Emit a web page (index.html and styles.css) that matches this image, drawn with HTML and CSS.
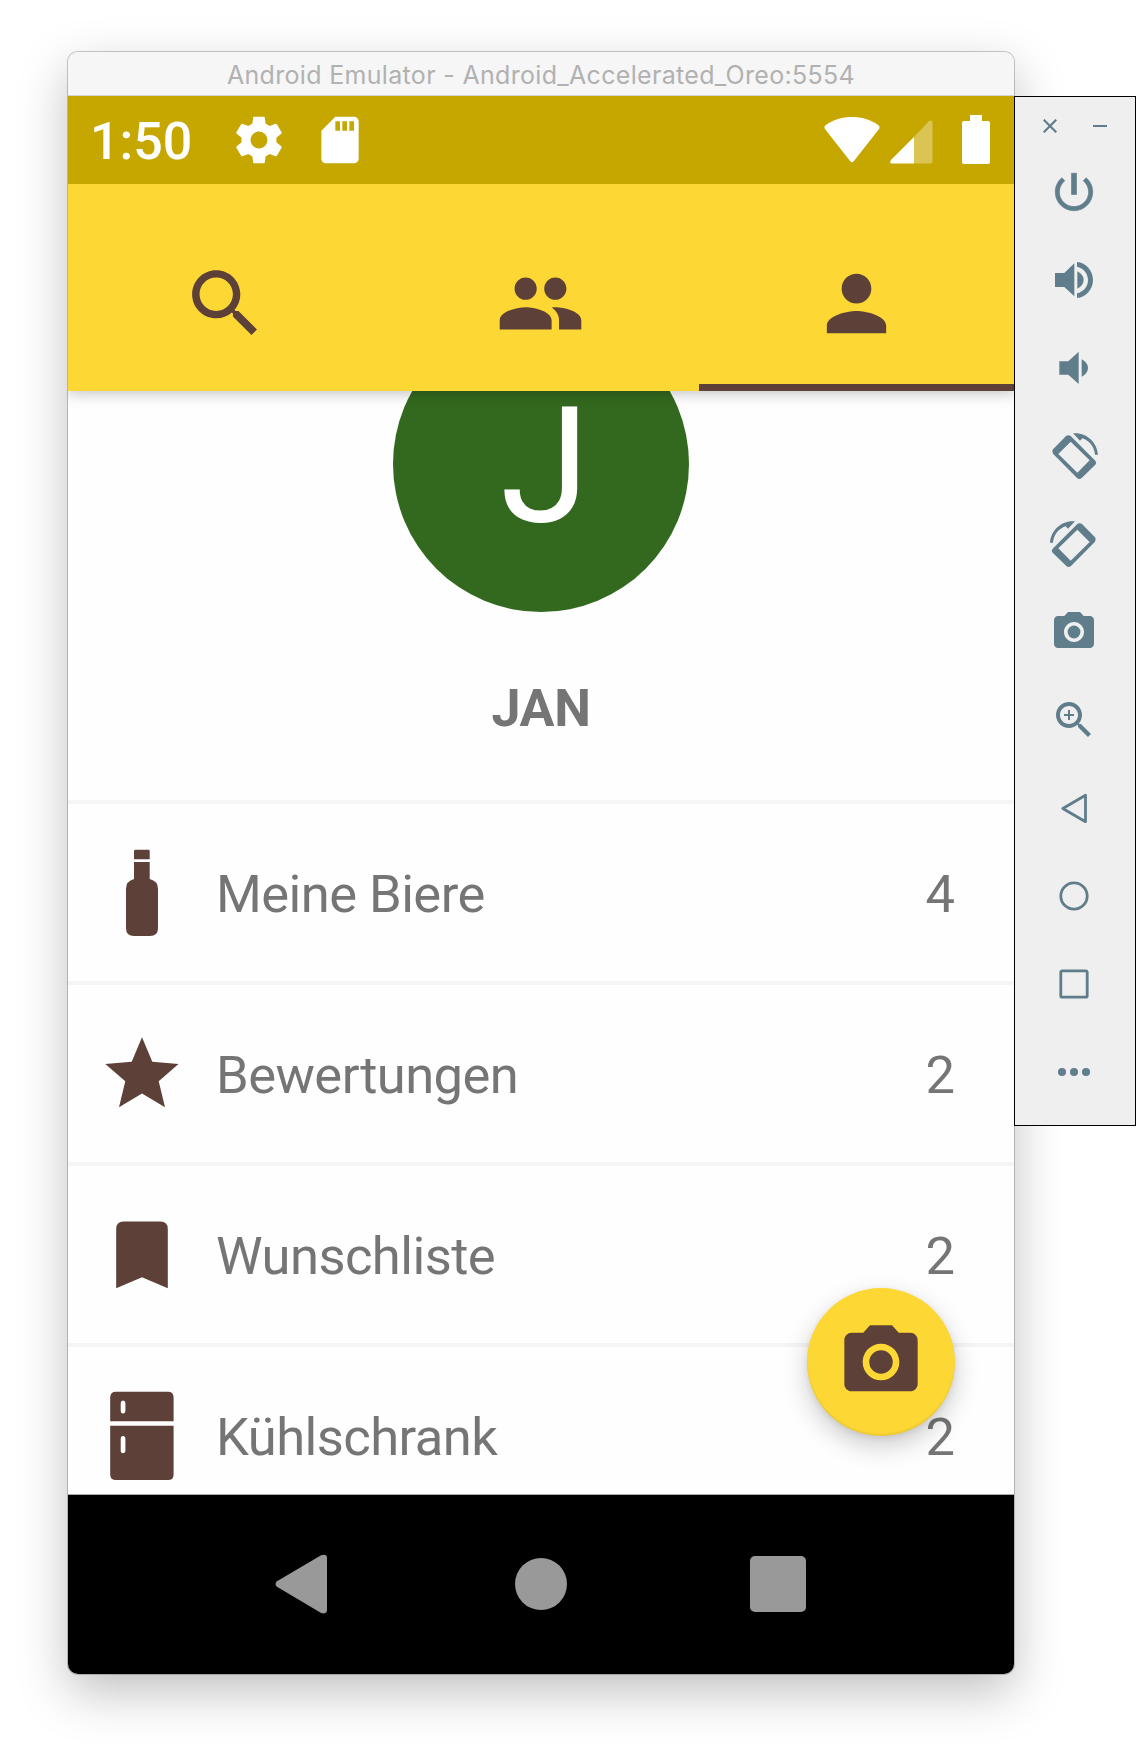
FILE: index.html
```html
<!DOCTYPE html>
<html lang="de">
<head>
<meta charset="utf-8">
<title>Android Emulator - Android_Accelerated_Oreo:5554</title>
<link rel="stylesheet" href="styles.css">
</head>
<body>
<main class="window">
  <header class="titlebar"><span class="title">Android Emulator - Android_Accelerated_Oreo:5554</span></header>
  <div class="status">
    <span class="clock">1:50</span>
    <svg class="gear" width="56" height="56" viewBox="0 0 24 24"><path d="M19.43 12.98c.04-.32.07-.64.07-.98s-.03-.66-.07-.98l2.11-1.65c.19-.15.24-.42.12-.64l-2-3.46c-.12-.22-.39-.3-.61-.22l-2.49 1c-.52-.4-1.08-.73-1.69-.98l-.38-2.65C14.46 2.18 14.25 2 14 2h-4c-.25 0-.46.18-.49.42l-.38 2.65c-.61.25-1.17.59-1.69.98l-2.49-1c-.23-.09-.49 0-.61.22l-2 3.46c-.13.22-.07.49.12.64l2.11 1.65c-.04.32-.07.65-.07.98s.03.66.07.98l-2.11 1.65c-.19.15-.24.42-.12.64l2 3.46c.12.22.39.3.61.22l2.49-1c.52.4 1.08.73 1.69.98l.38 2.65c.03.24.24.42.49.42h4c.25 0 .46-.18.49-.42l.38-2.65c.61-.25 1.17-.59 1.69-.98l2.49 1c.23.09.49 0 .61-.22l2-3.46c.12-.22.07-.49-.12-.64l-2.11-1.65zM12 15.6c-1.98 0-3.6-1.62-3.6-3.6s1.62-3.6 3.6-3.6 3.6 1.62 3.6 3.6-1.62 3.6-3.6 3.6z"/></svg>
    <svg class="sd" width="56" height="56" viewBox="0 0 24 24"><path d="M18 2h-8L4.020 8 4 20c0 1.100.9 2 2 2h12c1.100 0 2-.9 2-2V4c0-1.100-.9-2-2-2zm-6 6h-2V4h2v4zm3 0h-2V4h2v4zm3 0h-2V4h2v4z"/></svg>
    <span class="spacer"></span>
    <svg class="wifi" width="56" height="46" viewBox="0 0 58 46" preserveAspectRatio="none"><path d="M1 12C0 10.500 .5 9 2 8C10 2.500 19 0 29 0S48 2.500 56 8C57.500 9 58 10.500 57 12L31 44Q29 46.500 27 44Z"/></svg>
    <svg class="cell" width="43" height="44" viewBox="0 0 43 44"><path opacity=".33" d="M24 17L38.500 1.500Q42.500-1 42.500 3V41Q42.500 43.500 40 43.500H24Z"/><path d="M24 17V43.500H2Q-1 43.500 1 40Z"/></svg>
    <svg class="battery" width="28" height="49" viewBox="0 0 28 49"><path d="M8 0H20V6H26Q28 6 28 8V47Q28 49 26 49H2Q0 49 0 47V8Q0 6 2 6H8Z"/></svg>
  </div>
  <nav class="tabs">
    <div class="tab"><svg width="89" height="89" viewBox="0 0 24 24"><path d="M15.500 14h-.79l-.28-.27C15.410 12.590 16 11.110 16 9.500 16 5.910 13.090 3 9.500 3S3 5.910 3 9.500 5.910 16 9.500 16c1.610 0 3.090-.59 4.230-1.570l.27.28v.79l5 4.990L20.490 19l-4.990-5zm-6 0C7.010 14 5 11.990 5 9.500S7.010 5 9.500 5 14 7.010 14 9.500 11.990 14 9.500 14z"/></svg></div>
    <div class="tab"><svg width="89" height="89" viewBox="0 0 24 24"><path d="M16 11c1.660 0 2.990-1.340 2.990-3S17.660 5 16 5c-1.660 0-3 1.340-3 3s1.340 3 3 3zm-8 0c1.660 0 2.990-1.340 2.990-3S9.660 5 8 5C6.340 5 5 6.340 5 8s1.340 3 3 3zm0 2c-2.330 0-7 1.170-7 3.500V19h14v-2.500c0-2.330-4.670-3.500-7-3.500zm8 0c-.29 0-.62.02-.97.05 1.160.84 1.970 1.970 1.970 3.450V19h6v-2.500c0-2.330-4.670-3.500-7-3.500z"/></svg></div>
    <div class="tab active"><svg width="89" height="89" viewBox="0 0 24 24"><path d="M12 12c2.210 0 4-1.790 4-4s-1.790-4-4-4-4 1.790-4 4 1.790 4 4 4zm0 2c-2.670 0-8 1.340-8 4v2h16v-2c0-2.660-5.330-4-8-4z"/></svg></div>
  </nav>
  <section class="content">
    <div class="profile">
      <div class="avatar"><span class="initial">J</span></div>
      <div class="name">JAN</div>
    </div>
    <div class="row">
      <svg width="88" height="88" viewBox="0 0 88 88"><path d="M37.500 .8H50.500Q51.700 .8 51.700 2V10.300H36V2Q36 .8 37.500 .8ZM36 13H51.700V30Q60 32 60 40V79Q60 87 52 87H36Q28 87 28 79V40Q28 32 36 30Z"/></svg>
      <span class="label">Meine Biere</span><span class="count">4</span>
    </div>
    <div class="row">
      <svg width="88" height="88" viewBox="0 0 88 88"><path d="M44 7.300L54.300 31.700L80.500 34L60.700 51.300L67 77.300L44 63.500L21 77.300L27.300 51.300L7.300 34L33.700 31.700Z"/></svg>
      <span class="label">Bewertungen</span><span class="count">2</span>
    </div>
    <div class="row">
      <svg width="88" height="88" viewBox="0 0 88 88"><path d="M25.500 10.500H62.500Q69.800 10.500 69.800 18V77.300L44 66.300L18.200 77.300V18Q18.200 10.500 25.500 10.500Z"/></svg>
      <span class="label">Wunschliste</span><span class="count">2</span>
    </div>
    <div class="row">
      <svg width="88" height="90" viewBox="0 0 88 90"><path fill-rule="evenodd" d="M18 .8H70Q75.600 .8 75.600 6.500V30.300H12.200V6.500Q12.200 .8 18 .8ZM12.200 34.700H75.600V83.500Q75.600 89 70 89H18Q12.200 89 12.200 83.500ZM25 9.500Q22.700 9.500 22.700 12V20Q22.700 22.500 25 22.500T27.400 20V12Q27.400 9.500 25 9.500ZM25 45Q22.700 45 22.700 48V59.500Q22.700 62.300 25 62.300T27.400 59.500V48Q27.400 45 25 45Z"/></svg>
      <span class="label">Kühlschrank</span><span class="count">2</span>
    </div>
    <div class="fab"><svg width="88" height="88" viewBox="0 0 24 24"><circle cx="12" cy="12" r="3.200"/><path d="M9 2L7.170 4H4c-1.100 0-2 .9-2 2v12c0 1.100.9 2 2 2h16c1.100 0 2-.9 2-2V6c0-1.100-.9-2-2-2h-3.170L15 2H9zm3 15c-2.760 0-5-2.240-5-5s2.240-5 5-5 5 2.240 5 5-2.240 5-5 5z"/></svg></div>
  </section>
  <footer class="navbar">
    <div class="key back"><svg width="52" height="60" viewBox="0 0 53 61" preserveAspectRatio="none"><path d="M2 27.700L47 1.300Q53 -.5 53 4V57Q53 61.500 47 60L2 33.300Q-1 30.500 2 27.700Z"/></svg></div>
    <div class="key"><svg width="52" height="52" viewBox="0 0 52 52"><circle cx="26" cy="26" r="26"/></svg></div>
    <div class="key"><svg width="56" height="56" viewBox="0 0 56 56"><rect width="56" height="56" rx="5"/></svg></div>
  </footer>
</main>
<aside class="tools">
  <div class="controls">
    <svg width="14" height="14" viewBox="0 0 14 14"><path class="line" stroke-width="2.200" d="M.7 .7L13.300 13.300M13.300 .7L.7 13.300"/></svg>
    <svg width="14" height="14" viewBox="0 0 14 14"><path class="line" stroke-width="2" d="M0 7H14"/></svg>
  </div>
  <div class="tool"><svg width="50" height="50" viewBox="0 0 24 24"><path d="M13.200 3h-2.400v10.200h2.400V3zm4.630 2.170l-1.420 1.420C17.990 7.860 19 9.810 19 12c0 3.870-3.130 7-7 7s-7-3.130-7-7c0-2.190 1.010-4.140 2.580-5.420L6.170 5.170C4.230 6.820 3 9.260 3 12c0 4.970 4.030 9 9 9s9-4.030 9-9c0-2.740-1.230-5.180-3.170-6.830z" stroke="#607d8b" stroke-width=".3"/></svg></div>
  <div class="tool"><svg width="50" height="50" viewBox="0 0 150 150"><path d="M18 54H46L76 25V124L46 96H18ZM85 49C97 55 104 64 104 75S97 95 85 101ZM84 21C111 23 132 47 132 75S111 127 84 129V115C103 111 117 95 117 75S103 39 84 35Z"/></svg></div>
  <div class="tool"><svg width="50" height="50" viewBox="0 0 150 150"><path d="M31 55H58L89 26V123L58 95H31ZM98 49C110 55 117 64 117 75S110 95 98 101Z"/></svg></div>
  <div class="tool"><svg width="50" height="50" viewBox="0 0 150 150"><g><path fill-rule="evenodd" d="M12 55L51 15Q58 10 65 15L139 89Q144 95 139 101L98 141Q91 147 84 141L12 68Q7 61 12 55ZM28 69L85 125L122 88L65 32Z"/><path d="M72 7C112 3 144 33 147 71H138C136 47 121 29 100 22L93 29Z"/></g></svg></div>
  <div class="tool"><svg width="50" height="50" viewBox="0 0 150 150"><g transform="matrix(-1 0 0 1 150 0)"><path fill-rule="evenodd" d="M12 55L51 15Q58 10 65 15L139 89Q144 95 139 101L98 141Q91 147 84 141L12 68Q7 61 12 55ZM28 69L85 125L122 88L65 32Z"/><path d="M72 7C112 3 144 33 147 71H138C136 47 121 29 100 22L93 29Z"/></g></svg></div>
  <div class="tool"><svg width="48" height="48" viewBox="0 0 24 24"><circle cx="12" cy="12" r="3.200"/><path d="M9 2L7.170 4H4c-1.100 0-2 .9-2 2v12c0 1.100.9 2 2 2h16c1.100 0 2-.9 2-2V6c0-1.100-.9-2-2-2h-3.170L15 2H9zm3 15c-2.760 0-5-2.240-5-5s2.240-5 5-5 5 2.240 5 5-2.240 5-5 5z"/></svg></div>
  <div class="tool"><svg width="48" height="48" viewBox="0 0 24 24"><path d="M15.500 14h-.79l-.28-.27C15.410 12.590 16 11.110 16 9.500 16 5.910 13.090 3 9.500 3S3 5.910 3 9.500 5.910 16 9.500 16c1.610 0 3.090-.59 4.230-1.570l.27.28v.79l5 4.990L20.490 19l-4.990-5zm-6 0C7.010 14 5 11.990 5 9.500S7.010 5 9.500 5 14 7.010 14 9.500 11.990 14 9.500 14z"/><path d="M12 10h-2v2H9v-2H7V9h2V7h1v2h2v1z"/></svg></div>
  <div class="tool"><svg width="48" height="48" viewBox="0 0 48 48"><path class="line" stroke-width="2.800" stroke-linejoin="round" d="M12.800 24.500L35.500 11.300V37.700Z"/></svg></div>
  <div class="tool"><svg width="48" height="48" viewBox="0 0 48 48"><circle class="line" stroke-width="2.800" cx="24" cy="24" r="13.200"/></svg></div>
  <div class="tool"><svg width="48" height="48" viewBox="0 0 48 48"><rect class="line" stroke-width="2.800" x="10.800" y="10.800" width="26.400" height="26.400" rx="1.500"/></svg></div>
  <div class="tool"><svg width="48" height="48" viewBox="0 0 48 48"><circle cx="12" cy="24" r="4"/><circle cx="24" cy="24" r="4"/><circle cx="36" cy="24" r="4"/></svg></div>
</aside>
</body>
</html>
```
FILE: styles.css
```css
* { box-sizing: border-box; }

body {
  margin: 0;
  width: 1136px;
  height: 1758px;
  padding: 52px 0 0 68px;
  display: flex;
  align-items: flex-start;
  overflow: hidden;
  background: #fff;
  font-family: Roboto, "Liberation Sans", sans-serif;
}

svg { display: block; flex: none; }

.window {
  width: 946px;
  height: 1622px;
  flex: none;
  display: flex;
  flex-direction: column;
  overflow: hidden;
  border-radius: 10px;
  background: #fefefe;
  box-shadow: 0 0 0 1px rgba(0, 0, 0, .2), 0 18px 50px rgba(0, 0, 0, .25);
}

.titlebar {
  height: 44px;
  flex: none;
  display: flex;
  align-items: center;
  justify-content: center;
  background: #f6f6f6;
  border-bottom: 1px solid #d4d4d4;
  color: #b1b1b1;
  font: 400 25px/30px Inter, "Liberation Sans", sans-serif;
  letter-spacing: .32px;
  white-space: nowrap;
}

.title { padding-top: 3px; }

.status {
  height: 88px;
  flex: none;
  display: flex;
  align-items: center;
  padding: 0 24px 0 22px;
  background: #c6a700;
  color: #fff;
  fill: #fff;
}

.clock {
  width: 141px;
  font-size: 52px;
  line-height: 60px;
  font-weight: 500;
  padding-top: 3px;
}

.gear { margin-right: 25px; }
.spacer { flex: 1; }
.wifi { margin-right: 10px; }
.cell { margin: 3px 29px 0 0; }
.battery { margin-top: -1px; }

.tabs {
  position: relative;
  z-index: 1;
  height: 207px;
  flex: none;
  display: grid;
  grid-template-columns: repeat(3, 1fr);
  background: #fdd835;
  fill: #5d4037;
  box-shadow: 0 2px 14px rgba(0, 0, 0, .25);
  clip-path: inset(0 0 -30px 0);
}

.tab {
  display: flex;
  justify-content: center;
  align-items: flex-start;
  padding-top: 74.500px;
}

.active { border-bottom: 7px solid #5d4037; }

.content {
  position: relative;
  height: 1104px;
  flex: none;
  overflow: hidden;
  border-bottom: 1px solid #aaa;
  color: #757575;
  font-size: 52.500px;
  line-height: 62px;
}

.profile {
  height: 413px;
  display: flex;
  flex-direction: column;
  align-items: center;
  border-bottom: 4px solid #f5f5f5;
}

.avatar {
  width: 296px;
  height: 296px;
  flex: none;
  display: flex;
  align-items: center;
  justify-content: center;
  margin-top: -75px;
  padding: 3px 0 0 8px;
  border-radius: 50%;
  background: #33691e;
  color: #fff;
  font-size: 162px;
  line-height: 136px;
}

.name {
  margin-top: 66px;
  font-size: 52px;
  font-weight: 700;
  letter-spacing: -.4px;
}

.row {
  height: 181px;
  display: flex;
  align-items: center;
  padding: 0 59px 0 30px;
  border-bottom: 4px solid #f5f5f5;
  fill: #5d4037;
}

.label {
  flex: 1;
  padding: 3px 0 0 30px;
  letter-spacing: -.55px;
}

.count { padding-top: 3px; }

.fab {
  position: absolute;
  right: 59px;
  bottom: 58px;
  width: 148px;
  height: 148px;
  display: flex;
  align-items: center;
  justify-content: center;
  border-radius: 50%;
  background: #fdd835;
  fill: #5d4037;
  box-shadow: 0 10px 26px rgba(0, 0, 0, .2), 0 2px 6px rgba(0, 0, 0, .08), inset 0 -2px 2px rgba(0, 0, 0, .07);
}

.navbar {
  flex: 1;
  display: grid;
  grid-template-columns: repeat(3, 236.500px);
  justify-content: center;
  align-items: center;
  padding-bottom: 2px;
  background: #000;
  fill: #999;
}

.key { display: flex; justify-content: center; }
.back { padding-right: 7px; }

.tools {
  position: relative;
  width: 122px;
  height: 1030px;
  flex: none;
  margin-top: 44px;
  padding-right: 2px;
  border: 1px solid #000;
  background: #efefef;
  fill: #607d8b;
}

.controls {
  height: 51px;
  display: flex;
  align-items: center;
  justify-content: center;
  gap: 36px;
  padding: 7px 0 0 2px;
}

.tool {
  height: 88px;
  display: flex;
  align-items: center;
  justify-content: center;
}

.line { fill: none; stroke: #607d8b; }
```
